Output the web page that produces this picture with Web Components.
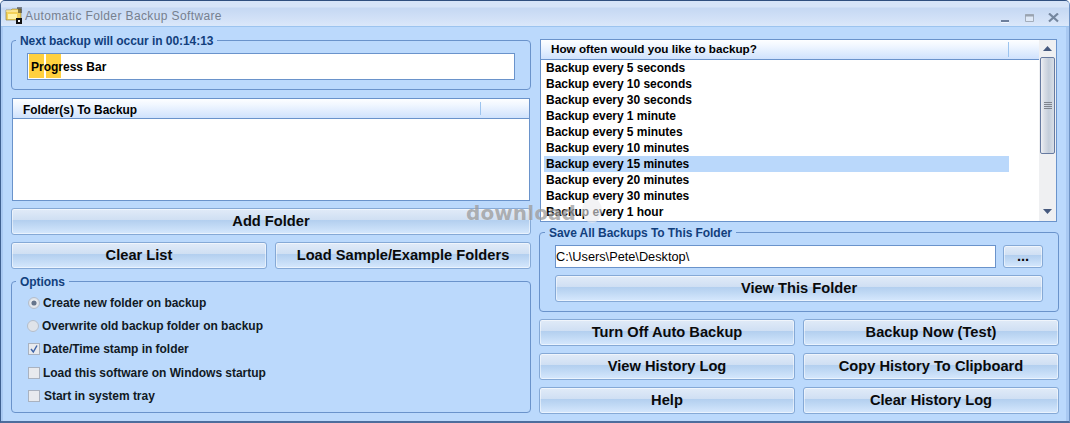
<!DOCTYPE html>
<html>
<head>
<meta charset="utf-8">
<title>Automatic Folder Backup Software</title>
<style>
html, body { margin: 0; padding: 0; }
body { width: 1070px; height: 423px; overflow: hidden; font: bold 12px "Liberation Sans", Arial, sans-serif; }
</style>
</head>
<body>
<app-window>
  <title-bar slot="title">Automatic Folder Backup Software</title-bar>

  <group-box slot="left" style="height:50px;margin-bottom:8px" pad="12px 15px 0 15px" heading="Next backup will occur in 00:14:13">
    <progress-field>Progress Bar</progress-field>
  </group-box>
  <list-panel slot="left" heading="Folder(s) To Backup" style="height:103px;margin:0 1px 7px 1px"></list-panel>
  <gloss-button slot="left" style="margin-bottom:7px">Add Folder</gloss-button>
  <button-row slot="left" style="margin-bottom:12px">
    <gloss-button>Clear List</gloss-button>
    <gloss-button>Load Sample/Example Folders</gloss-button>
  </button-row>
  <group-box slot="left" style="height:132px" pad="9px 0 0 16px" heading="Options">
    <option-list>
      <opt-item type="radio" checked>Create new folder on backup</opt-item>
      <opt-item type="radio" style="margin-left:-1px">Overwrite old backup folder on backup</opt-item>
      <opt-item type="check" checked>Date/Time stamp in folder</opt-item>
      <opt-item type="check">Load this software on Windows startup</opt-item>
      <opt-item type="check" nudge="1">Start in system tray</opt-item>
    </option-list>
  </group-box>

  <schedule-list slot="right" style="margin-top:-1px;margin-bottom:10px"></schedule-list>
  <group-box slot="right" style="height:80px;margin-bottom:7px;--legend-left:5px" pad="12px 15px 0 15px" heading="Save All Backups To This Folder">
    <folder-row>C:\Users\Pete\Desktop\</folder-row>
    <gloss-button style="margin-top:7px">View This Folder</gloss-button>
  </group-box>
  <button-row slot="right" style="margin-bottom:7px">
    <gloss-button>Turn Off Auto Backup</gloss-button>
    <gloss-button>Backup Now (Test)</gloss-button>
  </button-row>
  <button-row slot="right" style="margin-bottom:7px">
    <gloss-button>View History Log</gloss-button>
    <gloss-button>Copy History To Clipboard</gloss-button>
  </button-row>
  <button-row slot="right">
    <gloss-button>Help</gloss-button>
    <gloss-button>Clear History Log</gloss-button>
  </button-row>
</app-window>

<script>
function shadow(el, html) {
    const root = el.attachShadow({ mode: 'open' });
    root.innerHTML = html;
    return root;
}

customElements.define('app-window', class AppWindow extends HTMLElement {
    constructor() {
        super();
        shadow(this, `
<style>
:host { display:block; position:relative; width:1070px; height:423px; box-sizing:border-box; background:#bbd9fc;
  border:1px solid #6f93c4; border-top-color:#2f4f7f; border-bottom:2px solid #4d6d9c; border-left-color:#3f6191; border-radius:5px 5px 0 0; overflow:hidden;
  box-shadow:inset 2px 0 #a9c9f2, inset -3px 0 #a9c9f2; }
.body { display:grid; grid-template-columns:520px 520px; column-gap:8px; padding:13px 0 0 10px; }
.col { display:flex; flex-direction:column; min-width:0; }
.mark { position:absolute; left:465px; top:199px; width:140px; height:28px; pointer-events:none; }
.mark b { position:absolute; left:0; top:0; font:bold 20px/26px "DejaVu Sans", sans-serif; letter-spacing:.1px; color:rgba(115,115,115,.55); text-shadow:0 0 1px rgba(255,255,255,.5); }
.mark i { position:absolute; left:116px; top:-2px; width:20px; height:25px; border-radius:50%; background:rgba(235,235,238,.6); }
</style>
<slot name="title"></slot>
<div class="body">
  <div class="col"><slot name="left"></slot></div>
  <div class="col"><slot name="right"></slot></div>
</div>
<div class="mark"><i></i><b>download</b></div>`);
    }
});

customElements.define('title-bar', class TitleBar extends HTMLElement {
    constructor() {
        super();
        shadow(this, `
<style>
:host { display:flex; align-items:center; height:26px; box-sizing:border-box; padding:0 0 0 4px;
  background:linear-gradient(#d6e4f8 0,#d6e4f8 6px,#c5d8f3 7px,#d2e1f7 18px,#dce9fb 26px); border-bottom:1px solid #9cc4ef;
  font:12px "Liberation Sans", Arial, sans-serif; color:#76808f; letter-spacing:.38px; }
svg { display:block; flex:none; }
.txt { flex:1; margin-left:1px; padding-top:5px; }
.btns { display:flex; align-items:flex-start; padding:8px 10px 0 0; }
.btns svg { margin-left:15px; }
.btns svg:first-child { margin-left:0; }
.btns svg:last-child { margin-left:13px; }
</style>
<svg width="19" height="18" viewBox="0 0 19 18" style="margin-top:4px">
  <path d="M1 3h5l1-1h9v11H1z" fill="#f4d25a" stroke="#8a7a35" stroke-width=".6"/>
  <path d="M1 4h12" stroke="#fff6c8"/>
  <path d="M12 1h5M13 3h4M13 5h4" stroke="#222"/>
  <path d="M3 7h9v5H3z" fill="#fff3a8"/>
  <rect x="11" y="11" width="6" height="6" fill="#111"/><rect x="13" y="13" width="2" height="2" fill="#fff"/>
</svg>
<span class="txt"><slot></slot></span>
<div class="btns">
  <svg width="9" height="10" viewBox="0 0 9 10"><path d="M0 8h8" stroke="#6d7f9c" stroke-width="2"/><path d="M0 9.500h8" stroke="#eef5ff"/></svg>
  <svg width="10" height="10" viewBox="0 0 10 10"><path d="M.5 1.500h8v7h-8z" fill="#dfe9f7" stroke="#a3adbb"/><path d="M0 2.500h9" stroke="#9aa3b0" stroke-width="2"/></svg>
  <svg width="11" height="10" viewBox="0 0 11 10"><path d="M1 .5l9 8M10 .5L1 8.500" stroke="#75879f" stroke-width="2.200" fill="none"/></svg>
</div>`);
    }
});

customElements.define('group-box', class GroupBox extends HTMLElement {
    constructor() {
        super();
        const root = shadow(this, `
<style>
:host { display:block; position:relative; box-sizing:border-box; border:1px solid #6a93cb; border-radius:4px; }
.legend { position:absolute; left:var(--legend-left,4px); top:-7px; padding:0 4px; background:#bbd9fc; color:#123f7c; letter-spacing:-.06px; font:bold 12px/14px "Liberation Sans", Arial, sans-serif; white-space:nowrap; }
.inner { box-sizing:border-box; height:100%; }
</style>
<span class="legend"></span>
<div class="inner"><slot></slot></div>`);
        root.querySelector('.legend').textContent = this.getAttribute('heading');
        root.querySelector('.inner').style.padding = this.getAttribute('pad') || '0';
    }
});

customElements.define('progress-field', class ProgressField extends HTMLElement {
    constructor() {
        super();
        shadow(this, `
<style>
:host { display:flex; align-items:center; position:relative; height:27px; box-sizing:border-box; background:#fff; border:1px solid #6a93cb; padding:0 2px;
  font:bold 12px "Liberation Sans", Arial, sans-serif; color:#000; }
.seg { position:absolute; top:0; bottom:1px; background:#ffd03f; }
.txt { position:relative; margin-left:1px; }
</style>
<span class="seg" style="left:1px;width:15px"></span>
<span class="seg" style="left:18px;width:15px"></span>
<span class="txt"><slot></slot></span>`);
    }
});

customElements.define('list-panel', class ListPanel extends HTMLElement {
    constructor() {
        super();
        const root = shadow(this, `
<style>
:host { display:block; box-sizing:border-box; background:#fff; border:1px solid #6a93cb; }
.head { position:relative; height:20px; box-sizing:border-box; padding:4px 0 0 10px; border-bottom:1px solid #6a93cb;
  background:linear-gradient(#fdfeff,#f1f7ff 30%,#cfe2fd); font:bold 11.900px/14px "Liberation Sans", Arial, sans-serif; color:#000; }
.head::after { content:""; position:absolute; left:467px; top:3px; bottom:3px; width:1px; background:#9cc4ef; }
</style>
<div class="head"></div>`);
        root.querySelector('.head').textContent = this.getAttribute('heading');
    }
});

customElements.define('gloss-button', class GlossButton extends HTMLElement {
    constructor() {
        super();
        shadow(this, `
<style>
:host { display:flex; align-items:center; justify-content:center; height:27px; box-sizing:border-box; padding-bottom:2px; border:1px solid #85a9d6; border-radius:3px;
  background:linear-gradient(#e1ebf8 0,#cfdff3 44%,#b3cfef 45%,#bfd8f4 65%,#d6e8fd 100%);
  box-shadow:inset 0 0 0 1px rgba(255,255,255,.5);
  font:bold 14.670px "Liberation Sans", Arial, sans-serif; color:#0a0a0a; cursor:default; }
</style>
<slot></slot>`);
    }
});

customElements.define('button-row', class ButtonRow extends HTMLElement {
    constructor() {
        super();
        shadow(this, `
<style>
:host { display:grid; grid-template-columns:256px 256px; column-gap:8px; }
</style>
<slot></slot>`);
    }
});

customElements.define('option-list', class OptionList extends HTMLElement {
    constructor() {
        super();
        shadow(this, `
<style>
:host { display:grid; grid-auto-rows:23.300px; }
</style>
<slot></slot>`);
    }
});

customElements.define('opt-item', class OptItem extends HTMLElement {
    constructor() {
        super();
        const radio = this.getAttribute('type') === 'radio';
        const checked = this.hasAttribute('checked');
        let mark;
        if (radio) {
            mark = `<svg width="12" height="12" viewBox="0 0 12 12">
              <circle cx="6" cy="6" r="5.500" fill="#dfe3e9" stroke="#b4bdca"/>
              ${checked ? '<circle cx="6" cy="6" r="3.400" fill="#f1f3f6"/><circle cx="6" cy="6" r="2.600" fill="#66758c"/>' : ''}</svg>`;
        } else {
            mark = `<svg width="12" height="12" viewBox="0 0 12 12">
              <rect x=".5" y=".5" width="11" height="11" fill="#e8eaee" stroke="#a9b2c0"/>
              ${checked ? '<path d="M3 6l2.300 3L9 2.500" fill="none" stroke="#3f64a8" stroke-width="1.500"/>' : ''}</svg>`;
        }
        const root = shadow(this, `
<style>
:host { display:flex; align-items:center; font:bold 12px "Liberation Sans", Arial, sans-serif; letter-spacing:-.03px; color:#111a24; white-space:nowrap; }
svg { flex:none; display:block; margin-right:3px; }
</style>
${mark}<span class="txt"><slot></slot></span>`);
        root.querySelector('.txt').style.marginLeft = (this.getAttribute('nudge') || 0) + 'px';
    }
});

customElements.define('folder-row', class FolderRow extends HTMLElement {
    constructor() {
        super();
        shadow(this, `
<style>
:host { display:flex; gap:7px; height:23px; font:12.750px "Liberation Sans", Arial, sans-serif; color:#000; }
.field { flex:1; display:flex; align-items:center; box-sizing:border-box; background:#fff; border:1px solid #6a93cb; padding:0; }
.more { width:40px; height:23px; }
</style>
<div class="field"><slot></slot></div>
<gloss-button class="more">...</gloss-button>`);
    }
});

customElements.define('scroll-bar', class ScrollBar extends HTMLElement {
    constructor() {
        super();
        shadow(this, `
<style>
:host { display:flex; flex-direction:column; width:17px; box-sizing:border-box; background:#eff0f2; padding:0 1px; }
.arrow { height:17px; display:flex; align-items:center; justify-content:center; flex:none; }
.arrow.down { height:15px; padding-bottom:2px; }
.track { flex:1; }
.thumb { height:97px; box-sizing:border-box; border:1px solid #667aa0; border-radius:2px;
  background:linear-gradient(90deg,#eef0f4,#d9dee6 25%,#c3cdda 60%,#d8dee6);
  display:flex; align-items:center; justify-content:center; }
</style>
<div class="arrow"><svg width="9" height="5" viewBox="0 0 9 5"><path d="M4.500 0L9 5H0z" fill="#46597e"/></svg></div>
<div class="track"><div class="thumb"><svg width="8" height="7" viewBox="0 0 8 7"><path d="M0 .5h8M0 2.500h8M0 4.500h8M0 6.500h8" stroke="#80858e"/></svg></div></div>
<div class="arrow down"><svg width="9" height="5" viewBox="0 0 9 5"><path d="M0 0h9L4.500 5z" fill="#46597e"/></svg></div>`);
    }
});

customElements.define('schedule-list', class ScheduleList extends HTMLElement {
    constructor() {
        super();
        const items = ['5 seconds','10 seconds','30 seconds','1 minute','5 minutes','10 minutes','15 minutes','20 minutes','30 minutes','1 hour'];
        shadow(this, `
<style>
:host { display:grid; grid-template-columns:1fr 17px; height:183px; box-sizing:border-box; margin-left:1px; margin-right:2px; background:#fff; border:1px solid #6a93cb;
  font:bold 12px/16px "Liberation Sans", Arial, sans-serif; letter-spacing:-.04px; color:#000; overflow:hidden; }
.main { min-width:0; }
.head { position:relative; height:20px; box-sizing:border-box; padding:1px 0 0 10px; border-bottom:1px solid #6a93cb; background:linear-gradient(#fdfeff,#f1f7ff 30%,#cfe2fd); font-size:11.700px; letter-spacing:0; line-height:15px; }
.head::after { content:""; position:absolute; left:467px; top:2px; bottom:2px; width:1px; background:#9cc4ef; }
.rows { padding:0 0 0 3px; }
.row { width:465px; height:16px; padding-left:2px; box-sizing:border-box; }
.row.sel { background:#bad8fb; }
</style>
<div class="main">
  <div class="head">How often would you like to backup?</div>
  <div class="rows">${items.map((t, i) => `<div class="row${i === 6 ? ' sel' : ''}">Backup every ${t}</div>`).join('')}</div>
</div>
<scroll-bar></scroll-bar>`);
    }
});
</script>
</body>
</html>
